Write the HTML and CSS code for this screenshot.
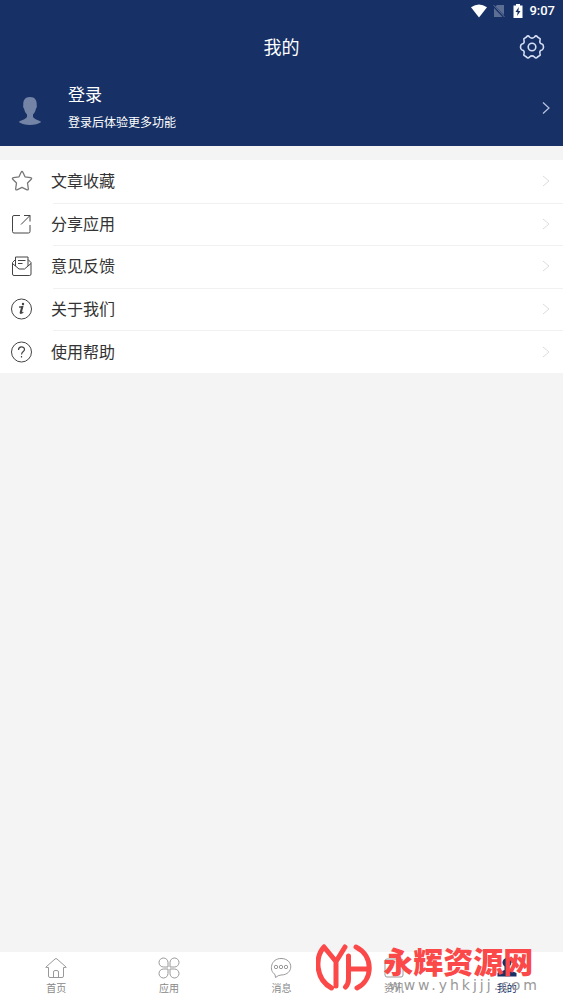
FILE: index.html
```html
<!DOCTYPE html>
<html lang="zh-CN">
<head>
<meta charset="utf-8">
<meta name="viewport" content="width=device-width, initial-scale=1">
<title>我的</title>
<link rel="stylesheet" href="styles.css">
</head>
<body>
<div class="app">
  <header class="header">
    <div class="status">
      <svg width="18" height="14" viewBox="0 0 18 14"><path d="M1 3.2Q9-2 17 3.2L9 13.500Z" fill="#fff"/></svg>
      <svg class="sim" width="12" height="14" viewBox="0 0 12 14"><path d="M4 1H11V11L2.500 2.500ZM1 4 9.500 13H1Z" fill="#5d6e94"/><path d="M.5 1 11.500 13" stroke="#5d6e94"/></svg>
      <svg class="battery" width="10" height="14" viewBox="0 0 10 14"><path d="M3 0H7V1.500H9.500V14H.5V1.500H3Z" fill="#fff"/><path d="M5.800 3 2.500 8H4.600L4.100 12 7.500 7H5.400Z" fill="#173166"/></svg>
      <time class="time">9:07</time>
    </div>
    <div class="titlebar">
      <h1 class="title">我的</h1>
      <button class="settings" type="button" aria-label="设置">
        <svg width="26" height="24" viewBox="0 0 26 24" fill="none" stroke="#d5def5" stroke-width="1.600" stroke-linejoin="round"><path d="M7.500 2Q9-.2 10.500 2Q13 4.300 15.500 2Q17-.2 18.500 2L20.500 3.300Q21.700 4 21 5.500Q20.200 8.500 23 9Q24.500 9.500 24.500 12T23 15Q20.200 15.500 21 18.500Q21.700 20 20.500 20.700L18.500 22Q17 24 15.500 22Q13 19.700 10.500 22Q9 24 7.500 22L5.500 20.700Q4.300 20 5 18.500Q5.800 15.500 3 15Q1.500 14.500 1.500 12T3 9Q5.800 8.500 5 5.500Q4.300 4 5.500 3.300Z"/><circle cx="13" cy="12" r="3.800"/></svg>
      </button>
    </div>
    <a class="profile" href="#login">
      <svg class="avatar" width="24" height="30" viewBox="0 0 24 30" fill="#7484a7"><path d="M12 1C7 1 5 4.500 5.300 9C5 9.500 5 12 6 12.500C6.500 15 7.500 17 9 18.500V21C7.500 23.500 3 24 .8 26C6 30 18 30 23.200 26C21 24 16.500 23.500 15 21V18.500C16.500 17 17.500 15 18 12.500C19 12 19 9.500 18.700 9C19 4.500 17 1 12 1Z"/></svg>
      <span class="profile-text"><strong class="name">登录</strong><span class="hint">登录后体验更多功能</span></span>
      <svg width="8" height="14" viewBox="0 0 8 14" fill="none" stroke="#b9c5e2" stroke-width="1.200"><path d="M1 1.500 7 7 1 12.500"/></svg>
    </a>
  </header>

  <main class="main">
    <nav class="menu" aria-label="功能">
      <a class="row" href="#favorites">
        <svg class="icon star" viewBox="0 0 22 22"><path d="M10 2.500Q11 .5 12 2.500L14 6.800 19.500 7.600Q21.500 8 20 9.500L16.500 13 17.300 18.500Q17.500 20.700 15.500 19.600L11 17.300 6.500 19.600Q4.500 20.700 4.700 18.500L5.500 13 2 9.500Q.5 8 2.500 7.600L8 6.800Z"/></svg>
        <span class="label">文章收藏</span>
        <svg class="chev" width="8" height="12" viewBox="0 0 8 12"><path d="M1 1 7 6 1 11"/></svg>
      </a>
      <a class="row" href="#share">
        <svg class="icon" viewBox="0 0 22 22"><path d="M9 2.500H3Q1.500 2.500 1.500 4V18.500Q1.500 20 3 20H17.500Q19 20 19 18.500V12M13 2.500H19V8.500M19 2.500 10 11.500"/></svg>
        <span class="label">分享应用</span>
        <svg class="chev" width="8" height="12" viewBox="0 0 8 12"><path d="M1 1 7 6 1 11"/></svg>
      </a>
      <a class="row" href="#feedback">
        <svg class="icon" viewBox="0 0 22 22"><path d="M4.500 4.500 1.500 7.500V19Q1.500 20.500 3 20.500H18.500Q20 20.500 20 19V7.500L17 4.500M1.500 8.500 8 14H13.500L20 8.500M4.500 11V2H17V11M7 5.500H14.500M7 8.500H11.500"/></svg>
        <span class="label">意见反馈</span>
        <svg class="chev" width="8" height="12" viewBox="0 0 8 12"><path d="M1 1 7 6 1 11"/></svg>
      </a>
      <a class="row" href="#about">
        <svg class="icon" viewBox="0 0 22 22"><circle cx="10.500" cy="11" r="10"/><path d="M8 9.200 11.800 8.500 10.200 14.500Q10 15.500 12.300 14.300M10.800 9 9.300 14.500Q9 16.300 12.300 14.300" stroke-width="1.200"/><circle cx="12" cy="6" r="1.200" fill="#444" stroke="none"/></svg>
        <span class="label">关于我们</span>
        <svg class="chev" width="8" height="12" viewBox="0 0 8 12"><path d="M1 1 7 6 1 11"/></svg>
      </a>
      <a class="row" href="#help">
        <svg class="icon" viewBox="0 0 22 22"><circle cx="10.500" cy="11" r="10"/><path stroke-width="1.200" d="M7.500 9C7.500 5 13.500 5 13.500 8.500C13.500 10.500 10.500 10.500 10.500 13.500M10.500 15V16.500"/></svg>
        <span class="label">使用帮助</span>
        <svg class="chev" width="8" height="12" viewBox="0 0 8 12"><path d="M1 1 7 6 1 11"/></svg>
      </a>
    </nav>
  </main>

  <footer class="footer">
    <nav class="tabs" aria-label="主导航">
      <a class="tab" href="#home"><svg class="tab-icon" viewBox="0 0 22 22"><path d="M1.500 10.500Q.5 11 1 10L10 2Q11 1 12 2L21 10Q21.500 11 20.500 10.500H18.500V19Q18.500 20.500 17 20.500H5Q3.500 20.500 3.500 19V10.500ZM8.500 20V15Q8.500 13.500 10 13.500H12Q13.500 13.500 13.500 15V20"/></svg><span>首页</span></a>
      <a class="tab" href="#apps"><svg class="tab-icon" viewBox="0 0 22 22"><path d="M10 10H5.500A4.500 4.500 0 1 1 10 5.500ZM12 10V5.500A4.500 4.500 0 1 1 16.500 10ZM10 12V16.500A4.500 4.500 0 1 1 5.500 12ZM12 12H16.500A4.500 4.500 0 1 1 12 16.500Z"/></svg><span>应用</span></a>
      <a class="tab" href="#messages"><svg class="tab-icon" viewBox="0 0 22 22"><path d="M5 17.500C-1.500 13.500 1 1.500 11 1.500C24 1.500 24 18 11 18Q8.500 18 5.500 20.500Z"/><circle cx="6" cy="10" r="1.700"/><circle cx="11" cy="10" r="1.700"/><circle cx="16" cy="10" r="1.700"/></svg><span>消息</span></a>
      <a class="tab" href="#news"><svg class="tab-icon" viewBox="0 0 22 22"><rect x="2" y="2" width="18" height="18" rx="2"/></svg><span>资讯</span></a>
      <a class="tab active" href="#mine" aria-current="page"><svg class="tab-icon" viewBox="0 0 22 22"><circle cx="11" cy="5.500" r="4.500"/><path d="M8.500 9H13.500V13L20.500 16V19.500H1.500V16L8.500 13Z"/></svg><span>我的</span></a>
    </nav>
    <div class="watermark">
      <svg width="56" height="50" viewBox="0 0 56 50" fill="none" stroke="#fb4848" stroke-width="5" stroke-linecap="round" stroke-linejoin="round"><path d="M8 5C-1 15-1 37 15.500 46M8 5 20 19.500V44M29 5 20 19.500M40 5C58 14 57 38 41 46M32.500 14V37Q32.500 42 29.500 45M32.500 27H52"/></svg>
      <div class="mark-text"><strong class="mark-name">永辉资源网</strong><span class="mark-url">www.yhkjjj.com</span></div>
    </div>
  </footer>
</div>
</body>
</html>
```
FILE: styles.css
```css
* { box-sizing: border-box; }
body {
  margin: 0;
  background: #f4f4f4;
  color: #333;
  font-family: Roboto, "Noto Sans CJK SC", sans-serif;
}
a { color: inherit; text-decoration: none; }
svg { display: block; flex: none; }
.app { display: flex; flex-direction: column; min-height: 100vh; }

.header { background: #173166; color: #fff; }
.status {
  display: flex;
  align-items: center;
  justify-content: flex-end;
  height: 22px;
  padding-right: 8px;
}
.sim { margin-left: 5px; }
.battery { margin-left: 8px; }
.time { margin-left: 6px; font-size: 13px; font-weight: 500; line-height: 22px; }
.titlebar {
  display: grid;
  grid-template-columns: 1fr auto 1fr;
  align-items: center;
  height: 50px;
  padding: 0 18px;
}
.title { grid-column: 2; margin: 0; padding-top: 2px; font-size: 18px; font-weight: 400; line-height: 26px; }
.settings { justify-self: end; padding: 0; border: 0; background: none; }
.profile { display: flex; align-items: center; height: 74px; padding: 0 13px 2px 18px; }
.avatar { margin-top: 6px; }
.profile-text { display: flex; flex: 1; flex-direction: column; gap: 4px; margin-left: 26px; }
.name { font-size: 17px; font-weight: 400; line-height: 26px; }
.hint { font-size: 12px; line-height: 22px; }

.main { flex: 1; padding-top: 14px; }
.menu { display: grid; grid-auto-rows: 1fr; height: 213px; background: #fff; }
.row { position: relative; display: flex; align-items: center; padding: 0 13px 0 11px; }
.row + .row::before {
  position: absolute;
  top: 0;
  right: 0;
  left: 53px;
  height: 1px;
  background: #f1f1f1;
  content: "";
}
.icon { width: 22px; height: 22px; fill: none; stroke: #444; stroke-width: 1; }
.star { stroke: #777; stroke-width: 1.3; stroke-linejoin: round; }
.label { flex: 1; margin-left: 18px; padding-top: 2px; font-size: 16px; line-height: 24px; }
.chev { fill: none; stroke: #ddd; stroke-width: 1; }

.footer { position: relative; background: #fff; }
.tabs { display: grid; grid-template-columns: repeat(5, 1fr); height: 48px; }
.tab {
  display: flex;
  flex-direction: column;
  align-items: center;
  padding-top: 5px;
  color: #888;
  font-size: 10px;
  line-height: 20px;
}
.tab-icon { width: 22px; height: 22px; fill: none; stroke: #999; stroke-width: 1; }
.active { color: #173166; }
.active .tab-icon { fill: #173166; stroke: none; }

.watermark {
  position: absolute;
  right: 23px;
  bottom: 8px;
  display: flex;
  align-items: center;
  gap: 11px;
}
.mark-text { display: flex; flex-direction: column; gap: 1px; }
.mark-name { color: #fb4848; font-family: "Noto Sans CJK SC", sans-serif; font-size: 30px; font-weight: 900; line-height: 34px; }
.mark-url { padding-left: 6px; color: #999; font-family: "DejaVu Sans", sans-serif; font-size: 14px; letter-spacing: 3px; line-height: 14px; }
```
